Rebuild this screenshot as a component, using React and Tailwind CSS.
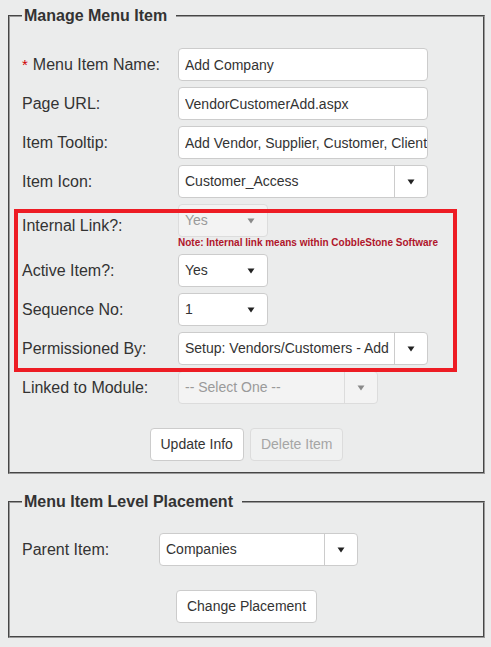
import React from "react";

function Arrow({ disabled }) {
  return (
    <svg width="8" height="6" viewBox="0 0 8 6" className="block">
      <path d="M0.5 0.5 L7.5 0.5 L4 5.5 Z" fill={disabled ? "#8a8a8a" : "#222"} />
    </svg>
  );
}

function TextBox({ value }) {
  return (
    <input
      readOnly
      value={value}
      className="block w-[250px] h-[33px] bg-white border border-[#cccccc] rounded-[4px] pl-[6px] pr-0 text-[14px] text-[#333] outline-none font-['Liberation_Sans',Arial,sans-serif]"
    />
  );
}

function Select({ value, width, divider, disabled }) {
  return (
    <div
      className={
        "h-[33px] border rounded-[4px] flex items-stretch text-[14px] whitespace-nowrap overflow-hidden " +
        (disabled
          ? "bg-[#f3f3f3] border-[#dcdcdc] text-[#9a9a9a]"
          : "bg-white border-[#cccccc] text-[#333]")
      }
      style={{ width }}
    >
      <div className="flex-1 pl-[6px] flex items-center overflow-hidden">{value}</div>
      <div
        className={
          "w-[33px] flex items-center justify-center " +
          (divider ? (disabled ? "border-l border-[#dcdcdc]" : "border-l border-[#cccccc]") : "")
        }
      >
        <Arrow disabled={disabled} />
      </div>
    </div>
  );
}

function Row({ label, required, children, labelW = "w-[156px]" }) {
  return (
    <div className="flex items-center">
      <div className={labelW + " text-[16px] text-[#333] shrink-0"}>
        {required && <span className="text-[#d00000] mr-[5px] text-[15px]">*</span>}
        {label}
      </div>
      <div>{children}</div>
    </div>
  );
}

function Button({ children, disabled }) {
  return (
    <button
      className={
        "h-[33px] px-[10px] rounded-[4px] border text-[14px] " +
        (disabled
          ? "bg-[#f0f1f1] border-[#dcdcdc] text-[#a5a5a5]"
          : "bg-white border-[#cccccc] text-[#333]")
      }
    >
      {children}
    </button>
  );
}

export default function App() {
  return (
    <div className="relative bg-[#ebecec] min-h-[647px] pt-[6px] pl-[8px] pr-[6px] font-['Liberation_Sans',Arial,sans-serif] text-[#333]">
      <fieldset className="border-2 [border-style:groove] border-[#9a9a9a] px-[12px] pt-[22px] pb-[11px] m-0">
        <legend className="pl-[2px] pr-[9px] text-[16px] font-bold leading-[20px] text-[#333]">
          Manage Menu Item
        </legend>
        <div className="flex flex-col gap-[6px]">
          <Row label="Menu Item Name:" required>
            <TextBox value="Add Company" />
          </Row>
          <Row label="Page URL:">
            <TextBox value="VendorCustomerAdd.aspx" />
          </Row>
          <Row label="Item Tooltip:">
            <TextBox value="Add Vendor, Supplier, Customer, Client, etc." />
          </Row>
          <Row label="Item Icon:">
            <Select value="Customer_Access" width={250} divider />
          </Row>
          <Row label="Internal Link?:">
            <div className="flex flex-col">
              <Select value="Yes" width={90} disabled />
              <div className="text-[10px] leading-[11px] font-bold text-[#b0152b] whitespace-nowrap">
                Note: Internal link means within CobbleStone Software
              </div>
            </div>
          </Row>
          <Row label="Active Item?:">
            <Select value="Yes" width={90} />
          </Row>
          <Row label="Sequence No:">
            <Select value="1" width={90} />
          </Row>
          <Row label="Permissioned By:">
            <Select value="Setup: Vendors/Customers - Add" width={250} divider />
          </Row>
          <Row label="Linked to Module:">
            <Select value="-- Select One --" width={200} divider disabled />
          </Row>
        </div>
        <div className="flex justify-center gap-[6px] mt-[24px]">
          <Button>Update Info</Button>
          <Button disabled>Delete Item</Button>
        </div>
      </fieldset>

      <fieldset className="mt-[18px] border-2 [border-style:groove] border-[#9a9a9a] px-[12px] pt-[21px] pb-[13px] m-0">
        <legend className="pl-[2px] pr-[9px] text-[16px] font-bold leading-[20px] text-[#333]">
          Menu Item Level Placement
        </legend>
        <Row label="Parent Item:" labelW="w-[137px]">
          <Select value="Companies" width={199} divider />
        </Row>
        <div className="flex justify-center mt-[24px]">
          <Button>Change Placement</Button>
        </div>
      </fieldset>

      <div className="absolute left-[14px] top-[209px] w-[443px] h-[163px] border-4 border-[#ed1c24] pointer-events-none" />
    </div>
  );
}
